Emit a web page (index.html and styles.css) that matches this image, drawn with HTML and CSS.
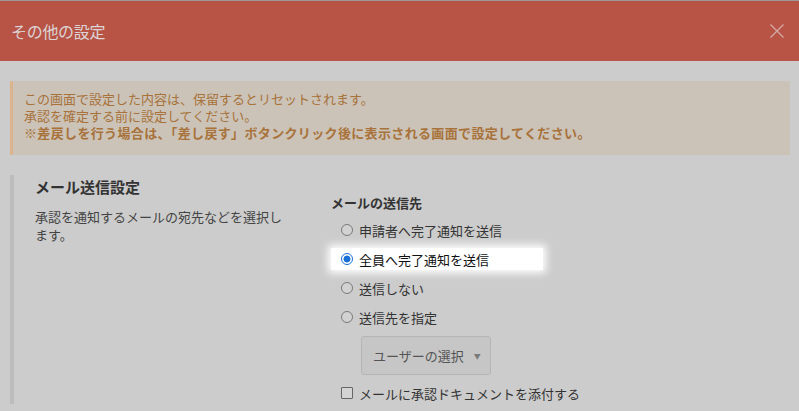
FILE: index.html
```html
<!DOCTYPE html>
<html lang="ja">
<head>
<meta charset="utf-8">
<link rel="stylesheet" href="styles.css">
</head>
<body>
<header class="dlg-header">
  <h1 class="dlg-title">その他の設定</h1>
  <button class="dlg-close" aria-label="閉じる">
    <svg width="14" height="14" viewBox="0 0 14 14"><path d="M0.5 0.5 L13.5 13.5 M13.5 0.5 L0.5 13.5" stroke="#d4aaa5" stroke-width="1.3" fill="none"/></svg>
  </button>
</header>
<main class="dlg-body">
  <div class="alert">
    <p>この画面で設定した内容は、保留するとリセットされます。</p>
    <p>承認を確定する前に設定してください。</p>
    <p class="strong">※差戻しを行う場合は、「差し戻す」ボタンクリック後に表示される画面で設定してください。</p>
  </div>
  <section class="setting">
    <div class="setting-info">
      <h2 class="setting-title">メール送信設定</h2>
      <p class="setting-desc">承認を通知するメールの宛先などを選択します。</p>
    </div>
    <div class="setting-form">
      <h3 class="form-label">メールの送信先</h3>
      <ul class="options">
        <li class="opt"><span class="radio"></span>申請者へ完了通知を送信</li>
        <li class="opt highlight"><span class="radio checked"></span>全員へ完了通知を送信</li>
        <li class="opt"><span class="radio"></span>送信しない</li>
        <li class="opt"><span class="radio"></span>送信先を指定</li>
      </ul>
      <div class="select-btn">ユーザーの選択<span class="caret">▼</span></div>
      <div class="opt check-row"><span class="checkbox"></span>メールに承認ドキュメントを添付する</div>
    </div>
  </section>
</main>
</body>
</html>
```
FILE: styles.css
```css
* { box-sizing: border-box; }
html, body { margin: 0; padding: 0; }
body {
  background: #cccccc;
  font-family: "Noto Sans CJK JP", "Noto Sans", sans-serif;
  width: 799px;
  height: 411px;
  overflow: hidden;
}
.dlg-header {
  border-top: 1px solid #999999;
  background: #b85445;
  height: 61px;
  display: flex;
  align-items: center;
  justify-content: space-between;
  padding: 0 15px 0 11px;
}
.dlg-title {
  margin: 0;
  font-size: 16px;
  font-weight: normal;
  color: #dcd4d6;
  line-height: 20px;
  letter-spacing: -0.3px;
}
.dlg-close {
  background: none;
  border: 0;
  padding: 0;
  width: 14px;
  height: 14px;
  display: flex;
}
.dlg-body {
  padding: 20px 9px 0 10px;
}
.alert {
  background: #cbc3b8;
  border-left: 3px solid #d9b48e;
  padding: 9px 11px 14px;
  color: #a8723a;
  font-size: 13px;
  line-height: 17px;
}
.alert p { margin: 0; height: 17px; }
.alert .strong { font-weight: bold; letter-spacing: 0.35px; }
.setting {
  margin-top: 20px;
  border-left: 4px solid #bdbdbd;
  padding-left: 21px;
  display: flex;
  gap: 41px;
}
.setting-info { width: 255px; padding-top: 2px; }
.setting-title {
  margin: 0;
  font-size: 15px;
  line-height: 20px;
  color: #333333;
  font-weight: bold;
}
.setting-desc {
  margin: 11px 0 0;
  font-size: 13px;
  line-height: 18px;
  color: #444444;
}
.setting-form { padding-top: 19px; }
.form-label {
  margin: 0;
  font-size: 13px;
  line-height: 18px;
  color: #333333;
  font-weight: bold;
}
.options {
  list-style: none;
  margin: 7px 0 0;
  padding: 0;
  display: flex;
  flex-direction: column;
  gap: 7px;
}
.opt {
  width: 212px;
  height: 22px;
  display: flex;
  align-items: center;
  gap: 6px;
  padding-left: 10px;
  font-size: 13px;
  color: #333333;
}
.highlight {
  background: #ffffff;
  box-shadow: 0 0 8px 3px #ffffff;
  color: #111111;
}
.radio {
  width: 12px;
  height: 12px;
  border-radius: 50%;
  border: 1px solid #7a7a7a;
  background: #d2d2d2;
  flex: none;
}
.radio.checked {
  border-color: #1a6fd6;
  background: radial-gradient(circle, #1a6fd6 0 3.2px, #ffffff 3.8px);
}
.select-btn {
  margin: 8px 0 0 30px;
  width: 130px;
  height: 39px;
  border: 1px solid #b5b5b5;
  border-radius: 3px;
  background: #c6c6c6;
  display: flex;
  align-items: center;
  padding-left: 11px;
  font-size: 13px;
  color: #555555;
}
.caret {
  font-size: 7px;
  color: #7a7a7a;
  margin-left: 10px;
}
.check-row { margin-top: 7px; width: auto; }
.checkbox {
  width: 12px;
  height: 12px;
  border: 1px solid #666666;
  border-radius: 1px;
  background: #d4d4d4;
  flex: none;
}
```
